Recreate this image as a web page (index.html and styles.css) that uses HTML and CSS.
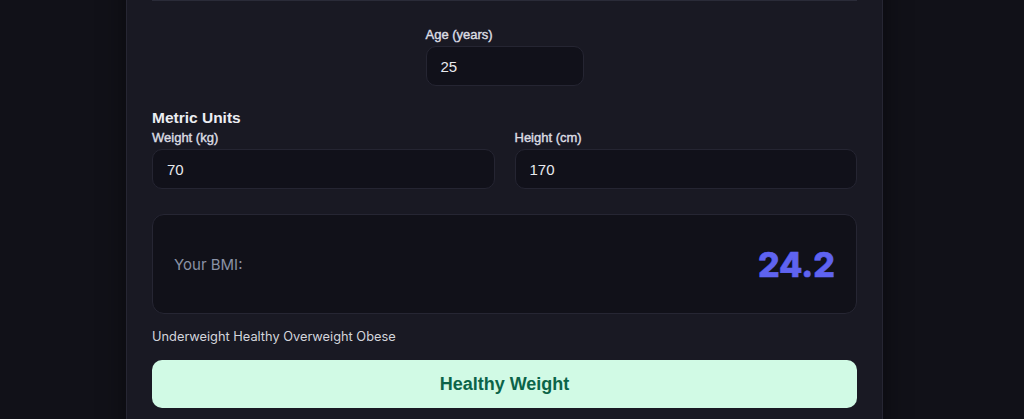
FILE: index.html
```html
<!DOCTYPE html>
<html lang="en">
<head>
<meta charset="utf-8">
<title>BMI Calculator</title>
<link rel="stylesheet" href="styles.css">
</head>
<body>
<div class="page">
  <main class="card">
    <div class="card-top"></div>

    <div class="age-row">
      <div class="field age-field">
        <label class="label">Age (years)</label>
        <div class="input">25</div>
      </div>
    </div>

    <section class="units">
      <h2 class="units-title">Metric Units</h2>
      <div class="units-grid">
        <div class="field">
          <label class="label">Weight (kg)</label>
          <div class="input">70</div>
        </div>
        <div class="field">
          <label class="label">Height (cm)</label>
          <div class="input">170</div>
        </div>
      </div>
    </section>

    <div class="result">
      <span class="result-label">Your BMI:</span>
      <span class="result-value">24.2</span>
    </div>

    <p class="scale">Underweight Healthy Overweight Obese</p>

    <div class="status">Healthy Weight</div>
  </main>
</div>
</body>
</html>
```

FILE: styles.css
```css
html, body {
  margin: 0;
  padding: 0;
  background: #111118;
  height: 100%;
  overflow: hidden;
}

.page {
  padding-right: 15px;
  display: flex;
  justify-content: center;
}

.card {
  width: 705px;
  margin-top: -40px;
  padding: 0 25px 30px;
  background: #191923;
  border: 1px solid #262633;
  box-shadow: 0 0 26px rgba(0, 0, 0, 0.45);
  font-family: "Liberation Sans", Arial, sans-serif;
  color: #e5e7eb;
}

.card-top {
  height: 39px;
  border-bottom: 1px solid #2a2b38;
}

.age-row {
  display: flex;
  justify-content: center;
  margin-top: 26px;
}

.age-field {
  width: 158px;
}

.field {
  display: flex;
  flex-direction: column;
  gap: 3px;
}

.label {
  font-size: 13px;
  line-height: 16px;
  font-weight: 400;
  -webkit-text-stroke: 0.4px #dcdde3;
  color: #dcdde3;
}

.input {
  box-sizing: border-box;
  height: 40px;
  padding: 0 14px;
  display: flex;
  align-items: center;
  background: #11111a;
  border: 1px solid #252532;
  border-radius: 10px;
  font-size: 15px;
  color: #e8e9ee;
}

.units {
  margin-top: 22px;
}

.units-title {
  margin: 0 0 3px;
  font-size: 15.5px;
  line-height: 19px;
  font-weight: 700;
  color: #eceef3;
}

.units-grid {
  display: grid;
  grid-template-columns: 1fr 1fr;
  column-gap: 20px;
}

.result {
  margin-top: 25px;
  height: 100px;
  box-sizing: border-box;
  padding: 0 21px;
  display: flex;
  align-items: center;
  justify-content: space-between;
  background: #111119;
  border: 1px solid #262633;
  border-radius: 12px;
  font-family: Inter, "Noto Sans", sans-serif;
}

.result-label {
  font-size: 15px;
  color: #8a92a6;
}

.result-value {
  font-size: 34px;
  font-weight: 800;
  color: #5f63f0;
  -webkit-text-stroke: 0.6px #5f63f0;
}

.scale {
  margin: 13px 0 0;
  font-family: Inter, "Noto Sans", sans-serif;
  font-size: 12.8px;
  line-height: 20px;
  color: #d3d5dc;
}

.status {
  margin-top: 13px;
  height: 48px;
  display: flex;
  align-items: center;
  justify-content: center;
  background: #d1fae5;
  border-radius: 10px;
  font-size: 18px;
  font-weight: 700;
  color: #0b6448;
}
```
